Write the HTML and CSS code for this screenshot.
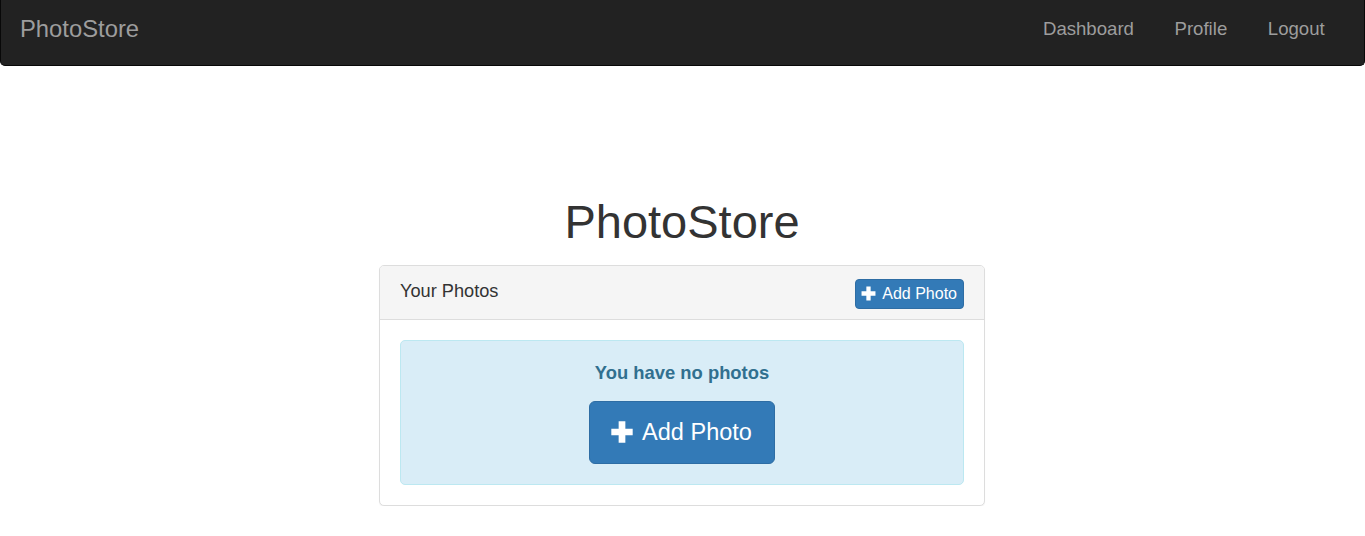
FILE: index.html
```html
<!DOCTYPE html>
<html lang="en">
<head>
<meta charset="utf-8">
<title>PhotoStore</title>
<link rel="stylesheet" href="styles.css">
</head>
<body>
<nav class="navbar">
  <a class="brand" href="#">PhotoStore</a>
  <ul class="nav-links">
    <li><a href="#">Dashboard</a></li>
    <li><a href="#">Profile</a></li>
    <li><a href="#">Logout</a></li>
  </ul>
</nav>
<main class="main">
  <h1 class="title">PhotoStore</h1>
  <section class="panel">
    <div class="panel-heading">
      <span class="panel-title">Your Photos</span>
      <a class="btn btn-sm" href="#"><svg class="plus-sm" viewBox="0 0 14 14" aria-hidden="true"><path d="M5 0.5h4v4.5h4.5v4h-4.5v4.5h-4v-4.5h-4.5v-4h4.5z" fill="#fff"/></svg>Add Photo</a>
    </div>
    <div class="panel-body">
      <div class="alert">
        <p class="alert-text">You have no photos</p>
        <a class="btn btn-lg" href="#"><svg class="plus-lg" viewBox="0 0 21 21" aria-hidden="true"><path d="M7.3 0.3h6.4v7h7v6.4h-7v7h-6.4v-7h-7v-6.4h7z" fill="#fff"/></svg>Add Photo</a>
      </div>
    </div>
  </section>
</main>
</body>
</html>
```

FILE: styles.css
```css
* { box-sizing: border-box; }
html, body { margin: 0; padding: 0; }
body {
  font-family: "Liberation Sans", Arial, Helvetica, sans-serif;
  font-size: 18px;
  line-height: 1.42857;
  color: #333;
  background: #fff;
}
a { text-decoration: none; }

.navbar {
  display: flex;
  align-items: center;
  justify-content: space-between;
  height: 66px;
  padding: 0 19px 8px 19px;
  background: #222;
  border: 1px solid #080808;
  border-top: none;
  border-radius: 0 0 5px 5px;
}
.brand {
  font-size: 23.8px;
  line-height: 25px;
  color: #9d9d9d;
}
.nav-links {
  display: flex;
  list-style: none;
  margin: 0;
  padding: 0;
}
.nav-links a {
  display: block;
  padding: 0 20.3px;
  font-size: 18.6px;
  line-height: 25px;
  color: #9d9d9d;
}

.main {
  display: flex;
  flex-direction: column;
  align-items: center;
  padding: 130px 1px 0 0;
}
.title {
  margin: 0 0 18px;
  font-size: 47px;
  font-weight: 500;
  line-height: 51px;
  color: #333;
}

.panel {
  width: 606px;
  border: 1px solid #ddd;
  border-radius: 5px;
  background: #fff;
  box-shadow: 0 1px 1px rgba(0,0,0,0.05);
}
.panel-heading {
  display: flex;
  justify-content: space-between;
  align-items: flex-start;
  padding: 13px 20px 10px;
  background: #f5f5f5;
  border-bottom: 1px solid #ddd;
  border-radius: 4px 4px 0 0;
}
.panel-title {
  font-size: 18.2px;
  line-height: 24px;
  color: #333;
}
.panel-body {
  padding: 20px;
}

.alert {
  display: flex;
  flex-direction: column;
  align-items: center;
  padding: 18px 19px 20px;
  background: #d9edf7;
  border: 1px solid #bce8f1;
  border-radius: 5px;
  color: #31708f;
}
.alert-text {
  margin: 0 0 15px;
  font-weight: 700;
  font-size: 18.4px;
  line-height: 27px;
}

.btn {
  display: inline-flex;
  align-items: center;
  color: #fff;
  background: #337ab7;
  border: 1px solid #2e6da4;
  white-space: nowrap;
}
.btn-sm {
  font-size: 16px;
  line-height: 22px;
  padding: 3px 6px 3px 5px;
  border-radius: 4px;
}
.plus-sm {
  width: 15px;
  height: 15px;
  margin-right: 6px;
  margin-top: -1px;
}
.btn-lg {
  font-size: 23.5px;
  line-height: 31px;
  padding: 15px 22px 15px 21px;
  border-radius: 6px;
}
.plus-lg {
  width: 22px;
  height: 22px;
  margin-right: 9px;
  margin-top: -1px;
}
```
